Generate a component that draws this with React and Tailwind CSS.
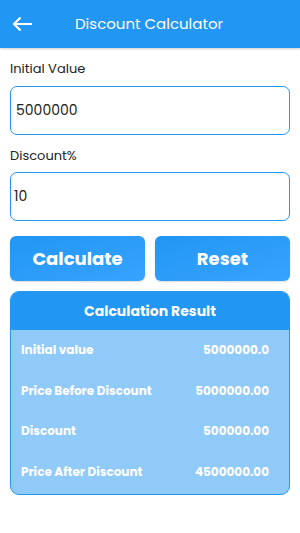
import React from "react";

const font = { fontFamily: '"Poppins", "Open Sans", "Noto Sans", sans-serif' };

function Row({ label, value }) {
  return (
    <div className="flex h-[40.5px] items-center justify-between pl-[10px] pr-[20px] text-[12px] font-bold text-white">
      <span>{label}</span>
      <span>{value}</span>
    </div>
  );
}

export default function App() {
  return (
    <div className="h-[533px] w-[300px] bg-white" style={font}>
      <div className="flex h-[48px] items-center bg-[#2196F3] shadow-[0_1px_2px_rgba(0,0,0,0.2)]">
        <svg className="ml-[12px]" width="21" height="16" viewBox="0 0 21 16" fill="none">
          <path d="M20 8H2M8.5 1.5L2 8l6.5 6.5" stroke="white" strokeWidth="2.2" strokeLinecap="butt" />
        </svg>
        <span className="ml-[42px] text-[15px] text-white">Discount Calculator</span>
      </div>
      <div className="px-[10px]">
        <div className="mt-[11px] text-[13px] text-[#222]">Initial Value</div>
        <div className="mt-[7px] flex h-[49px] items-center rounded-[7px] border border-[#2196F3] px-[5px] text-[14px] text-[#222]">
          5000000
        </div>
        <div className="mt-[11px] text-[13px] text-[#222]">Discount%</div>
        <div className="mt-[7px] flex h-[49px] items-center rounded-[7px] border border-[#2196F3] px-[3px] text-[14px] text-[#222]">
          10
        </div>
        <div className="mt-[15px] flex gap-[10px]">
          <button className="flex h-[45px] flex-1 items-center justify-center rounded-[6px] bg-gradient-to-br from-[#2196F3] to-[#36a3ff] text-[18px] font-bold text-white shadow-[0_1px_2px_rgba(0,0,0,0.15)]">
            Calculate
          </button>
          <button className="flex h-[45px] flex-1 items-center justify-center rounded-[6px] bg-gradient-to-br from-[#2196F3] to-[#36a3ff] text-[18px] font-bold text-white shadow-[0_1px_2px_rgba(0,0,0,0.15)]">
            Reset
          </button>
        </div>
        <div className="mt-[10px] overflow-hidden rounded-[9px] border border-[#2196F3] bg-[#90CAF9]">
          <div className="flex h-[38px] items-center justify-center bg-[#2196F3] text-[14px] font-bold text-white">
            Calculation Result
          </div>
          <div className="pb-[2px]">
            <Row label="Initial value" value="5000000.0" />
            <Row label="Price Before Discount" value="5000000.00" />
            <Row label="Discount" value="500000.00" />
            <Row label="Price After Discount" value="4500000.00" />
          </div>
        </div>
      </div>
    </div>
  );
}
